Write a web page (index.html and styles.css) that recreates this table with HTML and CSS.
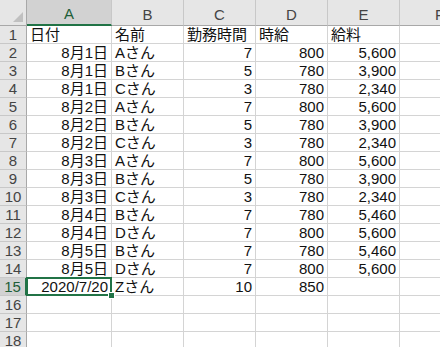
FILE: index.html
```html
<!DOCTYPE html>
<html lang="ja">
<head>
<meta charset="utf-8">
<link rel="stylesheet" href="styles.css">
</head>
<body>
<table class="sheet">
  <colgroup>
    <col class="c-rh"><col class="c-a"><col class="c-n"><col class="c-n"><col class="c-n"><col class="c-n"><col class="c-f">
  </colgroup>
  <thead>
    <tr>
      <th class="corner"><span class="tri"></span></th>
      <th class="ch sel">A</th><th class="ch">B</th><th class="ch">C</th><th class="ch">D</th><th class="ch">E</th><th class="ch">F</th>
    </tr>
  </thead>
  <tbody>
    <tr><th class="rh">1</th><td>日付</td><td>名前</td><td>勤務時間</td><td>時給</td><td>給料</td><td></td></tr>
    <tr><th class="rh">2</th><td class="r">8月1日</td><td>Aさん</td><td class="r">7</td><td class="r">800</td><td class="r">5,600</td><td></td></tr>
    <tr><th class="rh">3</th><td class="r">8月1日</td><td>Bさん</td><td class="r">5</td><td class="r">780</td><td class="r">3,900</td><td></td></tr>
    <tr><th class="rh">4</th><td class="r">8月1日</td><td>Cさん</td><td class="r">3</td><td class="r">780</td><td class="r">2,340</td><td></td></tr>
    <tr><th class="rh">5</th><td class="r">8月2日</td><td>Aさん</td><td class="r">7</td><td class="r">800</td><td class="r">5,600</td><td></td></tr>
    <tr><th class="rh">6</th><td class="r">8月2日</td><td>Bさん</td><td class="r">5</td><td class="r">780</td><td class="r">3,900</td><td></td></tr>
    <tr><th class="rh">7</th><td class="r">8月2日</td><td>Cさん</td><td class="r">3</td><td class="r">780</td><td class="r">2,340</td><td></td></tr>
    <tr><th class="rh">8</th><td class="r">8月3日</td><td>Aさん</td><td class="r">7</td><td class="r">800</td><td class="r">5,600</td><td></td></tr>
    <tr><th class="rh">9</th><td class="r">8月3日</td><td>Bさん</td><td class="r">5</td><td class="r">780</td><td class="r">3,900</td><td></td></tr>
    <tr><th class="rh">10</th><td class="r">8月3日</td><td>Cさん</td><td class="r">3</td><td class="r">780</td><td class="r">2,340</td><td></td></tr>
    <tr><th class="rh">11</th><td class="r">8月4日</td><td>Bさん</td><td class="r">7</td><td class="r">780</td><td class="r">5,460</td><td></td></tr>
    <tr><th class="rh">12</th><td class="r">8月4日</td><td>Dさん</td><td class="r">7</td><td class="r">800</td><td class="r">5,600</td><td></td></tr>
    <tr><th class="rh">13</th><td class="r">8月5日</td><td>Bさん</td><td class="r">7</td><td class="r">780</td><td class="r">5,460</td><td></td></tr>
    <tr><th class="rh">14</th><td class="r">8月5日</td><td>Dさん</td><td class="r">7</td><td class="r">800</td><td class="r">5,600</td><td></td></tr>
    <tr><th class="rh sel">15</th><td class="r active">2020/7/20<span class="box"></span><span class="handle"></span></td><td>Zさん</td><td class="r">10</td><td class="r">850</td><td></td><td></td></tr>
    <tr><th class="rh">16</th><td></td><td></td><td></td><td></td><td></td><td></td></tr>
    <tr><th class="rh">17</th><td></td><td></td><td></td><td></td><td></td><td></td></tr>
    <tr><th class="rh">18</th><td></td><td></td><td></td><td></td><td></td><td></td></tr>
  </tbody>
</table>
</body>
</html>
```
FILE: styles.css
```css
html, body {
  margin: 0;
  padding: 0;
  background: #ffffff;
  overflow: hidden;
}
body {
  width: 440px;
  height: 347px;
}
.sheet {
  border-collapse: separate;
  border-spacing: 0;
  table-layout: fixed;
  width: 480px;
  font-family: "Liberation Sans Narrow", "Liberation Sans", "Noto Sans CJK JP", sans-serif;
  font-size: 15px;
  color: #111;
}
.c-rh { width: 27px; }
.c-a { width: 85px; }
.c-n { width: 72px; }
.c-f { width: 80px; }

th, td {
  padding: 0;
  box-sizing: border-box;
  white-space: nowrap;
  overflow: visible;
  font-weight: normal;
}
thead th {
  height: 26px;
  background: #e6e6e6;
  border-right: 1px solid #c8c8c8;
  border-bottom: 1px solid #a8a8a8;
  color: #444;
  font-family: "Liberation Sans", sans-serif;
  font-size: 15px;
  vertical-align: bottom;
  line-height: 20px;
  text-align: center;
}
th.corner {
  position: relative;
  border-right: 1px solid #a8a8a8;
}
.tri {
  position: absolute;
  right: 3px;
  bottom: 3px;
  width: 0;
  height: 0;
  border-left: 10px solid transparent;
  border-bottom: 10px solid #c0c0c0;
}
th.ch.sel {
  background: #d2d2d2;
  border-bottom: 2px solid #217346;
  color: #1e5e38;
}
tbody th.rh {
  height: 18px;
  background: #e6e6e6;
  border-right: 1px solid #a8a8a8;
  border-bottom: 1px solid #c8c8c8;
  color: #444;
  text-align: center;
  line-height: 17px;
  font-family: "Liberation Sans", sans-serif;
  font-size: 15px;
}
tbody th.rh.sel {
  background: #d2d2d2;
  border-right: 2px solid #217346;
  color: #1e5e38;
}
td {
  height: 18px;
  border-right: 1px solid #d4d4d4;
  border-bottom: 1px solid #d4d4d4;
  line-height: 17px;
  padding-left: 3px;
  vertical-align: bottom;
}
td.r {
  text-align: right;
  padding-left: 0;
  padding-right: 3px;
}
td.active {
  position: relative;
}
.box {
  position: absolute;
  left: -1px;
  top: -1px;
  right: -1px;
  bottom: -1px;
  border: 2px solid #217346;
  pointer-events: none;
}
.handle {
  position: absolute;
  right: -4px;
  bottom: -4px;
  width: 5px;
  height: 5px;
  background: #217346;
  border: 1px solid #fff;
}
```
